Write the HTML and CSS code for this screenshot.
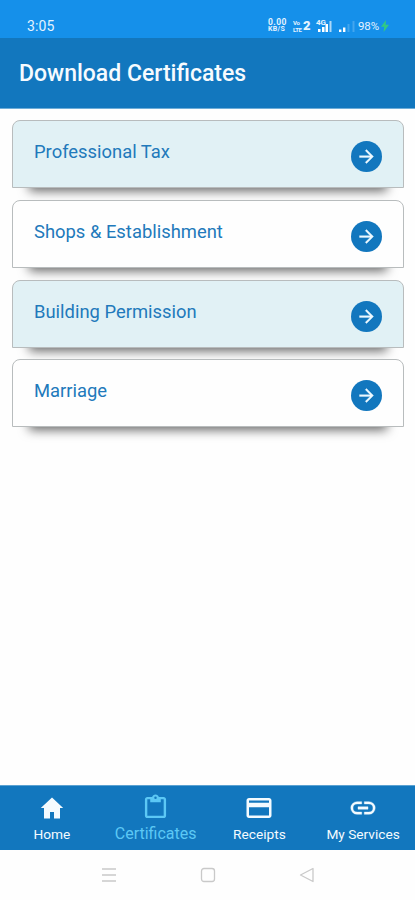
FILE: index.html
```html
<!DOCTYPE html>
<html lang="en">
<head>
<meta charset="utf-8">
<title>Download Certificates</title>
<link rel="stylesheet" href="styles.css">
</head>
<body>
<svg class="defs" width="0" height="0">
  <symbol id="arrow" viewBox="0 0 24 24"><path fill="currentColor" d="M12 4l-1.41 1.41L16.17 11H4v2h12.17l-5.58 5.59L12 20l8-8z"/></symbol>
</svg>
<div class="status">
  <span class="time">3:05</span>
  <div class="indicators">
    <span class="stack speed"><span>0.00</span><span>KB/S</span></span>
    <span class="stack volte"><span>Vo</span><span>LTE</span><b>2</b></span>
    <span class="sig sig-a"><small>4G</small><svg width="18" height="14" viewBox="0 0 18 14"><path fill="#fff" d="M3 10h2.500v3H3zM7 8h2.500v5H7zM10.500 5h2.500v8h-2.500z"/><path fill="#fff" opacity=".65" d="M14.500 2h2v11h-2z"/></svg></span>
    <svg class="sig-b" width="18" height="14" viewBox="0 0 18 14"><path fill="#fff" d="M1 10.500h2.400V13H1zM5 8.500h2.400V13H5z"/><path fill="#fff" opacity=".2" d="M9.500 5h2v8h-2zM14.500 2h2v11h-2z"/></svg>
    <span class="percent">98%</span>
    <svg class="bolt" width="8" height="12" viewBox="0 0 8 12"><path fill="#32c982" d="M5 0L0 6.800h3.200L2.600 12 8 4.800H4.600z"/></svg>
  </div>
</div>
<header class="header"><h1>Download Certificates</h1></header>
<main class="list">
  <a class="card tinted"><span>Professional Tax</span><i class="go"><svg><use href="#arrow"/></svg></i></a>
  <a class="card"><span>Shops &amp; Establishment</span><i class="go"><svg><use href="#arrow"/></svg></i></a>
  <a class="card tinted"><span>Building Permission</span><i class="go"><svg><use href="#arrow"/></svg></i></a>
  <a class="card"><span>Marriage</span><i class="go"><svg><use href="#arrow"/></svg></i></a>
</main>
<nav class="tabs">
  <a class="tab"><svg viewBox="0 0 26 26"><path d="M13 2.500L1.800 13H5v10.500h6V17h4v6.500h6V13h3.200z"/></svg><span>Home</span></a>
  <a class="tab active"><svg viewBox="0 0 26 26"><path fill-rule="evenodd" d="M21.500 3h-5C16 1.500 14.700.500 13 .500S10 1.500 9.500 3h-5C3.200 3 2 4.100 2 5.500v17C2 23.900 3.200 25 4.500 25h17c1.300 0 2.500-1.100 2.500-2.500v-17C24 4.100 22.800 3 21.500 3zM13 2.700a1.300 1.300 0 1 1 0 2.600 1.300 1.300 0 0 1 0-2.600zM21.500 22.600h-17V5.400h3V8.500h11V5.400h3z"/></svg><span>Certificates</span></a>
  <a class="tab"><svg viewBox="0 0 26 26"><path fill-rule="evenodd" d="M3 3h20c1.400 0 2.500 1.100 2.500 2.500v15c0 1.400-1.100 2.500-2.500 2.500H3C1.600 23 .500 21.900.500 20.500v-15C.500 4.100 1.600 3 3 3zM3 5.500v2.300h20V5.500zM3 12.200v8.300h20v-8.300z"/></svg><span>Receipts</span></a>
  <a class="tab"><svg viewBox="0 0 26 26"><path d="M3 13a4.100 4.100 0 0 1 4.100-4.100h4.600V6.700H7.100a6.300 6.300 0 0 0 0 12.600h4.600v-2.200H7.100A4.100 4.100 0 0 1 3 13zM8 14.200h10v-2.400H8zM18.900 6.700h-4.600v2.200h4.600a4.100 4.100 0 0 1 0 8.200h-4.600v2.200h4.600a6.300 6.300 0 0 0 0-12.600z" stroke="currentColor" stroke-width=".4"/></svg><span>My Services</span></a>
</nav>
<footer class="system">
  <svg viewBox="0 0 16 16"><path d="M1 2h14M1 8h14M1 14h14"/></svg>
  <svg viewBox="0 0 16 16"><rect x="1.500" y="1.500" width="13" height="13" rx="2.500"/></svg>
  <svg viewBox="0 0 16 16"><path d="M14 1.500v13L1.500 8z" stroke-linejoin="round"/></svg>
</footer>
</body>
</html>
```
FILE: styles.css
```css
* { box-sizing: border-box; }
body {
  margin: 0;
  height: 900px;
  display: flex;
  flex-direction: column;
  overflow: hidden;
  background: #fefefe;
  font-family: Roboto, "Liberation Sans", sans-serif;
}
.defs { position: absolute; }
.status {
  height: 38px;
  flex: none;
  display: flex;
  justify-content: space-between;
  padding: 14px 26px 0 27px;
  background: #1590ea;
  color: #e4f3ff;
}
.time { font-size: 14px; line-height: 24px; letter-spacing: .1px; }
.indicators { display: flex; align-items: center; height: 24px; }
.stack {
  display: grid;
  font-size: 8px;
  line-height: 7px;
  font-weight: 700;
}
.speed { width: 25px; font-size: 8.500px; letter-spacing: .4px; }
.speed span + span { font-size: 7px; letter-spacing: .3px; }
.volte {
  width: 22px;
  grid-template-columns: 10px 7px;
  font-size: 6px;
  letter-spacing: -.4px;
}
.volte span { grid-column: 1; }
.volte b { grid-column: 2; grid-row: 1 / 3; font-size: 13px; line-height: 14px; }
.sig { position: relative; width: 23px; height: 14px; }
.sig small { position: absolute; left: 1px; top: 0; font-size: 8px; line-height: 7px; font-weight: 700; }
.sig svg { display: block; }
.sig-b { margin-right: 2px; }
.percent { width: 22px; font-size: 11.500px; line-height: 14px; letter-spacing: -.1px; }
.bolt { margin-left: 1px; }
.header {
  height: 71px;
  flex: none;
  display: flex;
  align-items: center;
  padding: 2px 0 0 19px;
  background: #1277be;
  border-bottom: 1px solid #6eadd8;
}
.header h1 {
  margin: 0;
  font-size: 23px;
  line-height: 30px;
  font-weight: 500;
  color: #f6fbff;
}
.list {
  flex: 1;
  display: flex;
  flex-direction: column;
  gap: 11.700px;
  padding: 11.200px 11px 0 12px;
}
.card {
  height: 68px;
  flex: none;
  display: flex;
  justify-content: space-between;
  padding: 19px 21px 0 21px;
  border: 1px solid #b8bcbd;
  border-radius: 8px 8px 0 0;
  background: #fefefe;
  box-shadow: 0 20px 11px -17px rgba(0, 0, 0, .6);
  color: #2179bb;
  font-size: 18.400px;
  line-height: 24px;
}
.tinted { background: #e1f1f5; }
.go {
  width: 31px;
  height: 31px;
  margin-top: 1px;
  display: grid;
  place-items: center;
  border-radius: 50%;
  background: #1277be;
  color: #eef9ff;
}
.go svg { width: 21px; height: 21px; stroke: currentColor; stroke-width: .4; }
.tabs {
  height: 65px;
  flex: none;
  display: grid;
  grid-template-columns: repeat(4, 1fr);
  background: #1277be;
  border-top: 1px solid #5ba2d2;
}
.tab {
  display: flex;
  flex-direction: column;
  align-items: center;
  padding-top: 9px;
  color: #f4fbff;
  font-size: 13.700px;
  line-height: 18px;
  white-space: nowrap;
}
.tab svg { width: 26px; height: 26px; fill: currentColor; margin-bottom: 4px; }
.tab.active { padding-top: 8px; color: #5cc8f5; font-size: 16px; line-height: 20px; }
.tab.active svg { width: 25px; height: 25px; margin-bottom: 5px; }
.system {
  height: 50px;
  flex: none;
  display: flex;
  justify-content: center;
  gap: 83px;
  padding-top: 17px;
}
.system svg { width: 16px; height: 16px; fill: none; stroke: #c9c9c9; stroke-width: 1.300; }
```
